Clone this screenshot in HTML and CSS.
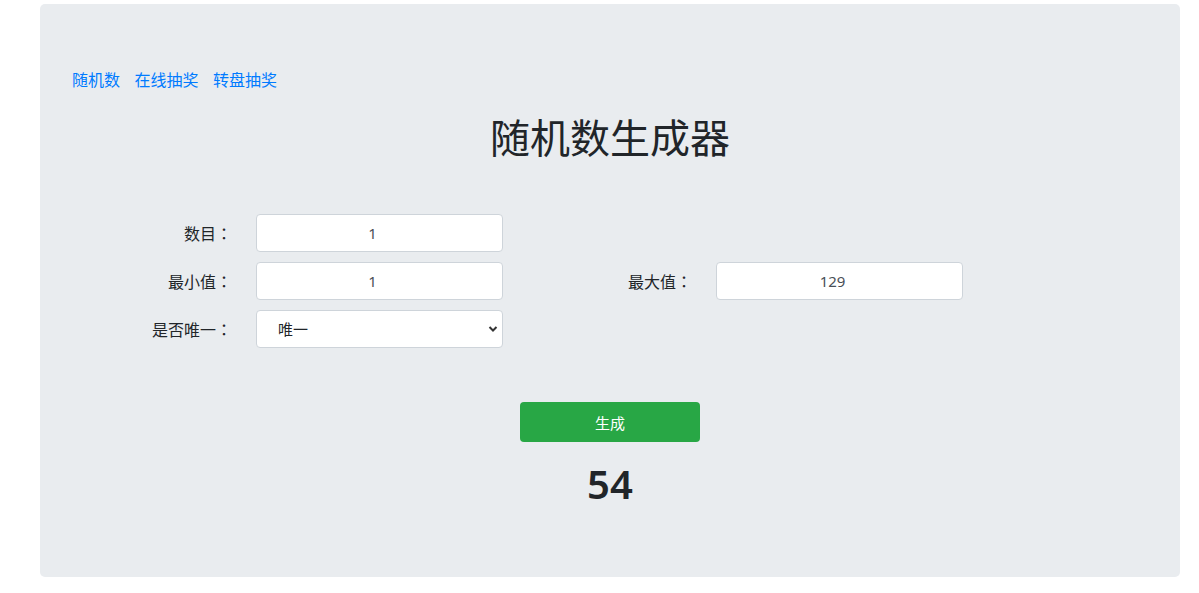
FILE: index.html
```html
<!DOCTYPE html>
<html lang="zh-CN">
<head>
    <meta charset="UTF-8">
    <meta name="viewport" content="width=device-width, initial-scale=1.0">
    <title>随机数生成器</title>
    <link rel="stylesheet" href="styles.css">
</head>
<body>
    <div class="jumbotron">
        <nav class="links">
            <a href="#">随机数</a>
            <a href="#">在线抽奖</a>
            <a href="#">转盘抽奖</a>
        </nav>

        <h1 class="title">随机数生成器</h1>

        <div class="form-grid">
            <label class="form-label">数目<span class="colon">：</span></label>
            <input class="form-input" type="text" value="1">
            <span></span>
            <span></span>

            <label class="form-label">最小值<span class="colon">：</span></label>
            <input class="form-input" type="text" value="1">
            <label class="form-label">最大值<span class="colon">：</span></label>
            <input class="form-input" type="text" value="129">

            <label class="form-label">是否唯一<span class="colon">：</span></label>
            <div class="select-wrap">
                <select class="form-select">
                    <option>唯一</option>
                    <option>不唯一</option>
                </select>
                <svg class="select-arrow" width="10" height="8" viewBox="0 0 10 8">
                    <path d="M1.5 2 L5 5.5 L8.5 2" fill="none" stroke="#333" stroke-width="2"/>
                </svg>
            </div>
        </div>

        <div class="actions">
            <button class="btn-generate">生成</button>
        </div>

        <div class="result">54</div>
    </div>
</body>
</html>
```

FILE: styles.css
```css
body {
    margin: 0;
    font-family: "Noto Sans", "Noto Sans CJK SC", sans-serif;
    font-size: 16px;
    color: #212529;
    background-color: #fff;
}
.jumbotron {
    width: 1140px;
    margin: 4px 0 0 40px;
    padding: 64px 32px 69px 32px;
    box-sizing: border-box;
    background-color: #e9ecef;
    border-radius: 5px;
}
.links {
    display: flex;
    gap: 14.5px;
    line-height: 24px;
}
.links a {
    color: #007bff;
    text-decoration: none;
}
.title {
    margin: 22px 0 0 0;
    font-size: 40px;
    line-height: 48px;
    font-weight: normal;
    text-align: center;
}
.form-grid {
    display: grid;
    grid-template-columns: 160px 247px 165px 247px;
    grid-auto-rows: 38px;
    column-gap: 24px;
    row-gap: 10px;
    margin-top: 52px;
}
.form-label {
    display: flex;
    align-items: center;
    justify-content: flex-end;
    font-size: 16px;
}
.colon {
    font-family: "Noto Sans CJK JP", sans-serif;
}
.form-input,
.form-select {
    width: 100%;
    height: 38px;
    box-sizing: border-box;
    border: 1px solid #ced4da;
    border-radius: 4px;
    background-color: #fff;
    font-family: "Noto Sans", "Noto Sans CJK SC", sans-serif;
    font-size: 15px;
    color: #495057;
}
.form-input {
    padding: 0 26px 0 12px;
    text-align: center;
}
.select-wrap {
    position: relative;
}
.form-select {
    appearance: none;
    -webkit-appearance: none;
    padding: 0 30px 0 21px;
    color: #212529;
}
.select-arrow {
    position: absolute;
    right: 5px;
    top: 15px;
    pointer-events: none;
}
.actions {
    display: flex;
    justify-content: center;
    margin-top: 54px;
}
.btn-generate {
    width: 180px;
    height: 40px;
    border: none;
    border-radius: 4px;
    background-color: #28a745;
    color: #fff;
    font-family: "Noto Sans", "Noto Sans CJK SC", sans-serif;
    font-size: 15px;
    cursor: pointer;
}
.result {
    margin-top: 18px;
    font-size: 40px;
    line-height: 48px;
    font-weight: 600;
    text-align: center;
}
```
